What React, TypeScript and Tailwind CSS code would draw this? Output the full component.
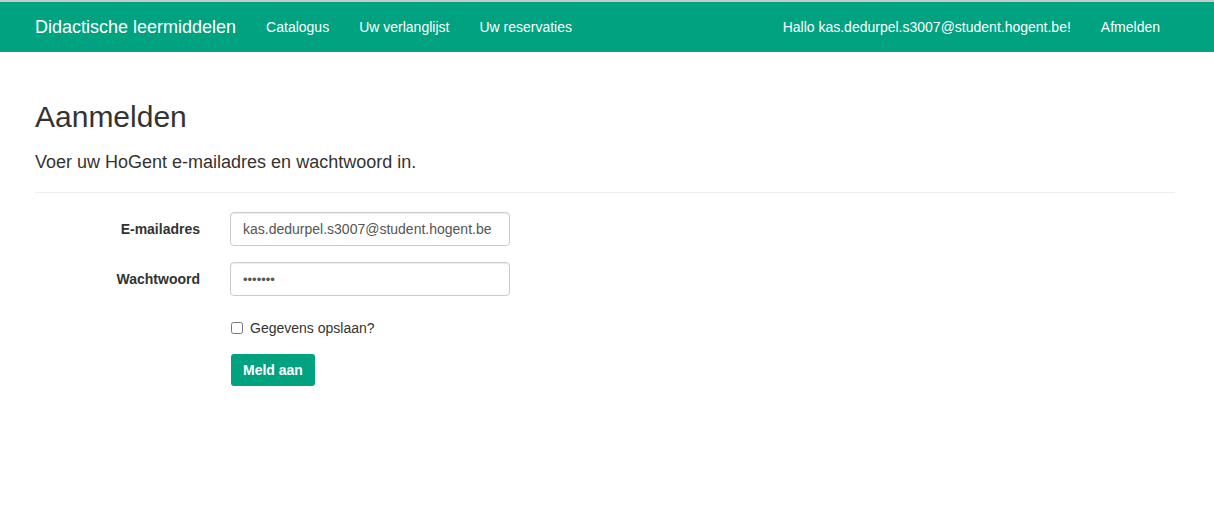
export default function App() {
  return (
    <div className="min-h-screen bg-white text-[14px] text-[#333] font-['Liberation_Sans',Arial,sans-serif]">
      <nav className="h-[52px] border-t-2 border-[#c8c8c8] bg-[#00a27f] flex items-center justify-between pl-[35px] pr-[39px] text-white">
        <div className="flex items-center">
          <span className="text-[18px] pr-[15px]">Didactische leermiddelen</span>
          <a className="px-[15px]">Catalogus</a>
          <a className="px-[15px]">Uw verlanglijst</a>
          <a className="px-[15px]">Uw reservaties</a>
        </div>
        <div className="flex items-center">
          <span className="px-[15px]">Hallo kas.dedurpel.s3007@student.hogent.be!</span>
          <a className="px-[15px]">Afmelden</a>
        </div>
      </nav>

      <main className="px-[35px] pr-[39px]">
        <h2 className="text-[30px] leading-[33px] mt-[48px]">Aanmelden</h2>
        <h4 className="text-[18px] leading-[20px] mt-[19px]">Voer uw HoGent e-mailadres en wachtwoord in.</h4>
        <hr className="mt-[20px] border-t border-[#eee]" />

        <form className="mt-[19px] flex flex-col">
          <div className="flex items-center mb-[16px]">
            <label className="w-[165px] text-right font-bold">E-mailadres</label>
            <input
              type="text"
              readOnly
              value="kas.dedurpel.s3007@student.hogent.be"
              className="ml-[30px] w-[280px] h-[34px] px-[12px] border border-[#ccc] rounded-[4px] text-[14px] text-[#555] shadow-[inset_0_1px_1px_rgba(0,0,0,0.075)] outline-none"
            />
          </div>
          <div className="flex items-center mb-[15px]">
            <label className="w-[165px] text-right font-bold">Wachtwoord</label>
            <input
              type="password"
              readOnly
              value="abcdefg"
              className="ml-[30px] w-[280px] h-[34px] px-[12px] border border-[#ccc] rounded-[4px] text-[13px] text-[#555] shadow-[inset_0_1px_1px_rgba(0,0,0,0.075)] outline-none"
            />
          </div>
          <div className="ml-[195px] flex items-center mt-[7px] h-[20px]">
            <input type="checkbox" className="ml-[1px] w-[12px] h-[12px] m-0" />
            <span className="ml-[7px]">Gegevens opslaan?</span>
          </div>
          <div className="ml-[196px] mt-[16px]">
            <button
              type="button"
              className="h-[32px] px-[12px] bg-[#00a27f] text-white font-bold rounded-[3px] text-[14px]"
            >
              Meld aan
            </button>
          </div>
        </form>
      </main>
    </div>
  );
}
